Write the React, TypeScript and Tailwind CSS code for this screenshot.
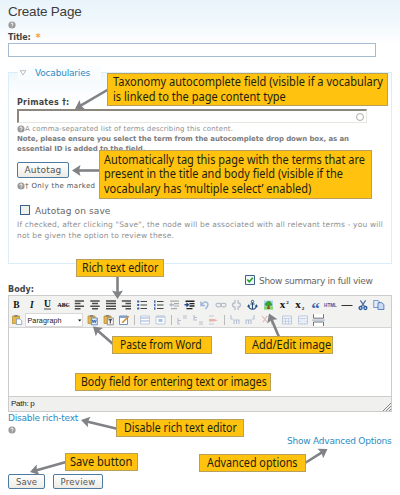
import { useLayoutEffect, useRef, useState } from "react";
import type { ReactNode } from "react";
import { clsx } from "clsx";

/* A single line of text whose tracking is adjusted to fill a given width. */
function Line({ w, className, children }: { w: number; className?: string; children: string }) {
  const ref = useRef<HTMLSpanElement>(null);
  const [spacing, setSpacing] = useState(0);
  useLayoutEffect(() => {
    const el = ref.current;
    if (el) {
      const natural = el.getBoundingClientRect().width - spacing * children.length;
      setSpacing((w - natural) / children.length);
    }
  }, [w, children]);
  return (
    <span className={clsx("block", className)}>
      <span ref={ref} className="inline-block whitespace-pre" style={{ letterSpacing: spacing }}>
        {children}
      </span>
    </span>
  );
}

/* A caption line, condensed horizontally to a given width. */
function Caption({ w, children }: { w: number; children: string }) {
  const ref = useRef<HTMLSpanElement>(null);
  const [scale, setScale] = useState(1);
  useLayoutEffect(() => {
    if (ref.current) setScale(w / ref.current.offsetWidth);
  }, [w, children]);
  return (
    <span className="block h-[14.5px]">
      <span ref={ref} className="inline-block origin-left whitespace-pre" style={{ transform: `scaleX(${scale})` }}>
        {children}
      </span>
    </span>
  );
}

function Help({ className }: { className?: string }) {
  return (
    <svg viewBox="0 0 8 8" className={clsx("size-[8px] shrink-0", className)}>
      <circle cx="4" cy="4" r="3.6" fill="#999" />
      <path d="M2.8 3.2Q2.9 2 4 2t1.2 1.1Q5.2 3.8 4 4.3v.5M4 5.5v.8" fill="none" stroke="#fff" strokeWidth=".9" />
    </svg>
  );
}

function Callout({ className, children }: { className: string; children: ReactNode }) {
  return (
    <div
      className={clsx(
        "absolute flex flex-col justify-center border border-[#b9a05a] bg-[#ffc20e] font-['Noto_Sans','Open_Sans',sans-serif] text-[12.5px] leading-[14.5px] text-[#231f10]",
        className,
      )}
    >
      {children}
    </div>
  );
}

function Button({ className, children }: { className: string; children: ReactNode }) {
  return (
    <button
      className={clsx(
        "flex items-center justify-center rounded-[2px] border border-[#4f7a9f] bg-linear-to-b from-white to-[#ecebe6] text-[#555]",
        className,
      )}
    >
      {children}
    </button>
  );
}

function Icon({ x, y = 10, children }: { x: number; y?: number; children: ReactNode }) {
  return <g transform={`translate(${x - 5} ${y - 5})`}>{children}</g>;
}

const clipboard = (
  <>
    <path d="M.5 1h7v7.5h-7z" fill="#e6b84c" stroke="#b88728" strokeWidth=".7" />
    <path d="M2.3 0h3.4v2H2.3z" fill="#8c887b" />
  </>
);
const list = <path d="M3.5 1.5H10M3.5 5H10M3.5 8.5H10" stroke="#444" strokeWidth="1.2" />;
const table = (
  <>
    <path d="M.5 1h9v8h-9z" fill="#f2f5fa" stroke="#bdc9dc" />
    <path d="M1 3.5h8M1 6.3h8M3.5 3.5V9M6.5 3.5V9" stroke="#bdc9dc" strokeWidth=".8" />
  </>
);

function Toolbar() {
  return (
    <svg viewBox="0 1 382 31" className="block h-[31px] w-[382px]" fill="none">
      <g fill="#111" fontFamily="'Liberation Serif', serif" fontWeight="700" fontSize="9.5" textAnchor="middle">
        <text x="7.3" y="13">B</text>
        <text x="22.8" y="13" fontStyle="italic">I</text>
        <text x="38.5" y="12.4">U</text>
        <text x="54.7" y="12.3" fontSize="5.8">ABC</text>
        <text x="273.5" y="13" fontSize="11">x</text>
        <text x="278.5" y="9" fontSize="5">2</text>
        <text x="289" y="13" fontSize="11">x</text>
        <text x="294" y="14.5" fontSize="5">2</text>
        <text x="321.5" y="11.8" fontSize="4.6" fill="#315a9c" fontFamily="'Liberation Sans', sans-serif">HTML</text>
        <text x="306.5" y="19.3" fontSize="17" fill="#3a69a8">“</text>
      </g>
      <path d="M35 14h7" stroke="#222" strokeWidth=".8" />
      <path d="M48.5 10.5h12" stroke="#333" strokeWidth=".5" />
      <g stroke="#4c4c4c" strokeWidth="1.5">
        <Icon x={70.5}><path d="M.3 1h9.2M.3 3.6h5.7M.3 6.2h9.2M.3 8.8h5.7" /></Icon>
        <Icon x={86}><path d="M.3 1h9.4M2 3.6h6M.3 6.2h9.4M2 8.8h6" /></Icon>
        <Icon x={102}><path d="M0 1h10M0 3.6h10M0 6.2h10M0 8.8h10" /></Icon>
        <Icon x={117.5}><path d="M.3 1h9.2M4 3.6h5.5M.3 6.2h9.2M4 8.8h5.5" /></Icon>
      </g>
      <Icon x={133}>{list}<path d="M.2 1.5h2M.2 5h2M.2 8.5h2" stroke="#315a9c" strokeWidth="2" /></Icon>
      <Icon x={149.5}>{list}<path d="M1.3 .2v2.5M1.3 3.8v2.5M1.3 7.2v2.6" stroke="#315a9c" strokeWidth="1.3" /></Icon>
      <Icon x={165}>
        <path d="M1 1.2h9M5 3.6h5M5 6h5M2 8.6h6" stroke="#aaa" strokeWidth="1.2" />
        <path d="M0 4.8l3-2.3v1.6h2v1.4H3v1.6z" fill="#aeb9cc" />
      </Icon>
      <Icon x={180.5}>
        <path d="M1 1.2h9M5 3.6h5M5 6h5M2 8.6h6" stroke="#222" strokeWidth="1.4" />
        <path d="M5 4.8L1.9 2.2v1.8H0v1.6h1.9v1.8z" fill="#244985" />
      </Icon>
      <Icon x={195.5}><path d="M1.5 1.5v4h4M1.8 5Q5 .5 7.5 2.5T6 9" stroke="#9cb5dc" strokeWidth="1.5" /></Icon>
      <Icon x={212}>
        <rect x="0" y="3.3" width="5" height="3.6" rx="1.8" stroke="#b7bdc8" strokeWidth="1.2" />
        <rect x="5" y="3.3" width="5" height="3.6" rx="1.8" stroke="#b7bdc8" strokeWidth="1.2" />
      </Icon>
      <Icon x={227.5}>
        <path d="M4 3H2Q0 5 2 7h2M6 3h2q2 2 0 4H6M3 0l1 2M7 0L6 2M3 10l1-2M7 10L6 8" stroke="#b7bdc8" strokeWidth="1.3" />
      </Icon>
      <Icon x={243.5}>
        <circle cx="5" cy="1.5" r="1.2" stroke="#244c78" strokeWidth=".9" />
        <path d="M5 2.5V9M2.8 4h4.4M.8 5.5Q1.3 9 5 9.3 8.7 9 9.2 5.5M.3 7l.7-1.7 1.3 1.2M9.7 7L9 5.3 7.7 6.5" stroke="#244c78" strokeWidth="1.1" />
      </Icon>
      <Icon x={259.5}>
        <path d="M.5 .5h9v9h-9z" fill="#a9d5ef" />
        <path d="M.5 6.5h9v3h-9z" fill="#8fd463" />
        <path d="M4.2 5h1.6l.5 4H3.7z" fill="#7c4d22" />
        <path d="M1.2 5Q.8 3 2.6 2.4 3.6 .5 5.5 1 7.5 1 7.8 2.9 9.4 3.9 8.5 5.5 6.5 6.3 5 5.6 2.5 6.5 1.2 5z" fill="#3ba332" />
      </Icon>
      <path d="M332.5 10.5h11" stroke="#333" />
      <Icon x={354}>
        <path d="M2.3 .3L6.7 6.6M7.7 .3L3.3 6.6" stroke="#52749d" strokeWidth="1.3" />
        <circle cx="2.6" cy="8" r="1.5" stroke="#24579b" strokeWidth="1.3" />
        <circle cx="7.4" cy="8" r="1.5" stroke="#24579b" strokeWidth="1.3" />
      </Icon>
      <Icon x={369.5}>
        <path d="M.2.5h4.5l1.5 1.5v5.5H.2z" fill="#e3edf9" stroke="#5b83bd" strokeWidth=".8" />
        <path d="M4.5 2.7h3.8L10.4 4.5v5H4.5z" fill="#cadcf3" stroke="#3f6dae" strokeWidth=".8" />
      </Icon>

      <Icon x={8} y={25}>{clipboard}<path d="M4.5 4h3.3l1.9 1.7v3.8H4.5z" fill="#fff" stroke="#6f91bd" strokeWidth=".7" /></Icon>
      <path d="M16.5 18.5h57v13h-57z" fill="#fff" stroke="#ccc" strokeWidth=".7" />
      <text x="18.5" y="27.6" fontSize="7.2" fill="#222" fontFamily="'Liberation Sans', sans-serif" textLength="34">Paragraph</text>
      <path d="M69 24.5h3.4l-1.7 1.9z" fill="#111" />
      <Icon x={83.5} y={25}>
        {clipboard}
        <path d="M3.8 3h6v6.8h-6z" fill="#e3edfb" stroke="#4c76b7" strokeWidth=".8" />
        <path d="M4.8 4.7l.8 3 1.1-2.6 1.1 2.6.9-3" stroke="#275aa5" strokeWidth=".9" />
      </Icon>
      <Icon x={99.5} y={25}>
        {clipboard}
        <path d="M3.8 3h6v6.8h-6z" fill="#fff" stroke="#777" strokeWidth=".8" />
        <path d="M5 4.8h3.6M6.8 4.8v3.7" stroke="#222" strokeWidth="1" />
      </Icon>
      <Icon x={115} y={25}>
        <path d="M.5 1h8v8.5h-8z" fill="#fff" stroke="#6e94c1" />
        <path d="M1 2h7" stroke="#6e94c1" strokeWidth="1.6" />
        <path d="M3.3 7.8L9.7 1.2" stroke="#d38d36" strokeWidth="1.6" />
      </Icon>
      <path d="M125.5 20v10M162.5 20v10M215.5 20v10" stroke="#bbb" />
      <Icon x={136} y={25}><path d="M.5 1h9v8h-9z" fill="#fff" stroke="#bdc9dc" /><path d="M1 3h8M1 6h8" stroke="#b9c9e4" strokeWidth="1.5" /></Icon>
      <Icon x={151.5} y={25}><path d="M.5 1h9v8h-9z" fill="#fff" stroke="#bdc9dc" /><path d="M1 2h8" stroke="#bdc9dc" strokeWidth="1.5" /><path d="M3 4h4v3H3z" fill="#adc0df" /></Icon>
      <Icon x={173} y={25}><path d="M1 3v6h2M1 5.5h3M6 1h4M6 3h4" stroke="#b7bfcb" strokeWidth="1.1" /></Icon>
      <Icon x={189} y={25}><path d="M1 0v5h3M1 2.5h3M6 7h4M6 9h4" stroke="#b7bfcb" strokeWidth="1.1" /></Icon>
      <Icon x={204} y={25}><path d="M1 1h5M1 9h5" stroke="#c3c9d2" /><path d="M1 4h5l4 1.2L6 6.5H1z" fill="#e9b1ab" /></Icon>
      <Icon x={226} y={25}><path d="M1 0v4h2M4 9V5h5v4M6.5 5v4" stroke="#b6c2d3" strokeWidth="1.1" /></Icon>
      <Icon x={241} y={25}><path d="M9 0v4H7M1 9V5h5v4M3.5 5v4" stroke="#b6c2d3" strokeWidth="1.1" /></Icon>
      <Icon x={257} y={25}><path d="M1 1l5 6M6 1L2 7" stroke="#e0b5b5" strokeWidth="1.1" /><path d="M6.5 1.5h4v8" stroke="#ccc" /></Icon>
      <Icon x={278} y={25}>{table}</Icon>
      <Icon x={294} y={25}>{table}<path d="M3 4h4v4H3z" fill="#e8eef8" /></Icon>
      <Icon x={309.5} y={25}>
        <path d="M0-.8v4h10v-4M0 11V7h10v4" fill="#fff" stroke="#666" strokeWidth=".9" />
        <path d="M-1.5 5.1h13" stroke="#8fa9c8" strokeWidth=".9" />
      </Icon>
    </svg>
  );
}

/* Annotation arrow from a callout to the control it describes. */
function Arrow({ from, to }: { from: [number, number]; to: [number, number] }) {
  const [x1, y1] = from;
  const [x2, y2] = to;
  const length = Math.hypot(x2 - x1, y2 - y1);
  const angle = (Math.atan2(y2 - y1, x2 - x1) * 180) / Math.PI;
  return (
    <g transform={`translate(${x1} ${y1}) rotate(${angle})`} fill="#808285">
      <path d={`M0-1.3H${length - 6}V1.3H0z`} />
      <path d={`M${length} 0l-8.5-5.5 1.5 5.5-1.5 5.5z`} />
    </g>
  );
}

export default function App() {
  return (
    <div className="relative h-[495px] w-[400px] overflow-hidden bg-white bg-[linear-gradient(to_bottom,#e9f4fa_0px,#f0f8fc_22px,#ffffff_44px)] pl-[8px] font-['DejaVu_Sans',Verdana,sans-serif] text-[#666]">
      <h1 className="h-[21px] pt-[3px] font-['Liberation_Sans',sans-serif] text-[13.5px] leading-[18px] text-[#3c3c3c]">
        <Line w={73.5}>Create Page</Line>
      </h1>
      <Help />
      <div className="mt-[3px] flex h-[11px] items-center gap-[5px] text-[8px] leading-[11px] font-bold text-[#444]">
        <Line w={22.5}>Title:</Line>
        <span className="text-[10px] text-[#f5a81c]">*</span>
      </div>
      <input className="block h-[14px] w-[368px] border border-[#a5bbcf] bg-white" />

      <fieldset className="mt-[15px] h-[192px] w-[384px] border border-[#dcedfa] bg-linear-to-b from-[#f0f8fd] to-white to-[28px] px-[8px]">
        <div className="-mt-[7px] ml-px flex h-[14px] w-[83px] items-center bg-[#fafdff]">
          <svg viewBox="0 0 8 6" className="ml-[1px] h-[6px] w-[8px]">
            <path d="M1.2.7h5.6L4 5z" fill="#fff" stroke="#b5b5b5" strokeWidth=".9" />
          </svg>
          <Line w={55} className="ml-[8px] text-[9px] leading-[14px] text-[#2b8cc4]">Vocabularies</Line>
        </div>
        <Line w={52.5} className="mt-[17px] h-[11px] text-[8px] leading-[12px] font-bold text-[#444]">Primates †:</Line>
        <div className="mt-px flex h-[14px] w-[350px] items-center justify-end border border-t-2 border-l-2 border-[#e8e6e0] border-t-[#8b877c] border-l-[#8b877c] bg-white pr-[2px]">
          <span className="size-[8px] rounded-full border-[1.5px] border-[#aaa]" />
        </div>
        <div className="mt-px flex h-[10px] items-center text-[7px] leading-[10px] text-[#8f8f8f]">
          <Help />
          <Line w={208}>A comma-separated list of terms describing this content.</Line>
        </div>
        <div className="text-[7px] leading-[10px] font-bold text-[#7c7c7c]">
          <Line w={332}>Note, please ensure you select the term from the autocomplete drop down box, as an</Line>
          <Line w={128}>essential ID is added to the field.</Line>
        </div>
        <Button className="mt-[8px] h-[16px] w-[52px] text-[9px] leading-[12px]">
          <Line w={37}>Autotag</Line>
        </Button>
        <div className="mt-[3px] flex h-[10px] items-center text-[7px] leading-[10px] text-[#555]">
          <Help />
          <Line w={73}>† Only the marked </Line>
        </div>
        <div className="mt-[13px] ml-[3px] flex h-[12px] items-center text-[9px] leading-[12px]">
          <span className="size-[10px] border border-[#38618e] bg-[#f0f0ed]" />
          <Line w={75.5} className="ml-[5px] pt-px">Autotag on save</Line>
        </div>
        <div className="mt-[3px] text-[7.5px] leading-[11px] text-[#8f8f8f]">
          <Line w={366}>If checked, after clicking "Save", the node will be associated with all relevant terms - you will</Line>
          <Line w={157}>not be given the option to review these.</Line>
        </div>
      </fieldset>

      <div className="mt-[10px] ml-[237px] flex h-[12px] items-center text-[9px] leading-[12px]">
        <svg viewBox="0 0 10 10" className="size-[10px]">
          <path d="M.5.5h9v9h-9z" fill="#f4f6f5" stroke="#38618e" />
          <path d="M2.3 4.5l2 2.2 3.5-4" fill="none" stroke="#25a02d" strokeWidth="1.7" />
        </svg>
        <Line w={113.5} className="ml-[4px] pt-px">Show summary in full view</Line>
      </div>
      <Line w={26} className="-mt-[2px] h-[11px] text-[8px] leading-[12px] font-bold text-[#444]">Body:</Line>
      <div className="flex h-[117px] w-[384px] flex-col border border-[#ccc] bg-white">
        <div className="h-[32px] border-b border-[#d4d4d4] bg-[#f2f2f1]">
          <Toolbar />
        </div>
        <div className="flex-1" />
        <div className="flex h-[15px] items-center justify-between border-t border-[#ccc] bg-[#f0f0ee] pl-[2px] font-['Liberation_Sans',sans-serif] text-[8px] leading-[14px] text-[#222]">
          <Line w={23.5}>Path: p</Line>
          <svg viewBox="0 0 8 8" className="size-[8px] self-end">
            <path d="M0 8l8-8M3 8l5-5M6 8l2-2" stroke="#777" strokeWidth=".9" />
          </svg>
        </div>
      </div>
      <Line w={70} className="h-[13px] text-[9px] leading-[13px] text-[#2b8cc4]">Disable rich-text</Line>
      <Help className="mt-px" />
      <Line w={104.5} className="mt-px ml-[279px] h-[12px] text-[9px] leading-[12px] text-[#2b8cc4]">Show Advanced Options</Line>
      <div className="mt-[27px] flex gap-[8px] text-[8.5px] leading-[12px]">
        <Button className="h-[15px] w-[37px]">
          <Line w={21}>Save</Line>
        </Button>
        <Button className="h-[15px] w-[50px]">
          <Line w={35}>Preview</Line>
        </Button>
      </div>

      <svg viewBox="0 0 400 495" className="pointer-events-none absolute inset-0 h-[495px] w-[400px]">
        <Arrow from={[109, 89]} to={[75, 109]} />
        <Arrow from={[100, 170.5]} to={[72, 170.5]} />
        <Arrow from={[117.5, 275]} to={[117.5, 299]} />
        <Arrow from={[113, 344]} to={[93, 326.5]} />
        <Arrow from={[279, 337]} to={[269, 313.5]} />
        <Arrow from={[118, 429]} to={[81, 420]} />
        <Arrow from={[66, 462]} to={[30, 472]} />
        <Arrow from={[305, 463]} to={[327.5, 449]} />
      </svg>

      <Callout className="top-[73px] left-[107px] h-[33px] w-[281px] pl-[5px]">
        <Caption w={270}>Taxonomy autocomplete field (visible if a vocabulary</Caption>
        <Caption w={173}>is linked to the page content type</Caption>
      </Callout>
      <Callout className="top-[150px] left-[99px] h-[49px] w-[273px] pl-[4px]">
        <Caption w={261}>Automatically tag this page with the terms that are</Caption>
        <Caption w={238.5}>present in the title and body field (visible if the</Caption>
        <Caption w={207}>vocabulary has ‘multiple select’ enabled)</Caption>
      </Callout>
      <Callout className="top-[259px] left-[76px] h-[18px] w-[88px] pl-[5px]">
        <Caption w={76.5}>Rich text editor</Caption>
      </Callout>
      <Callout className="top-[336px] left-[112px] h-[18px] w-[100px] pl-[7px]">
        <Caption w={82}>Paste from Word</Caption>
      </Callout>
      <Callout className="top-[336px] left-[245px] h-[18px] w-[88px] pl-[6px]">
        <Caption w={79}>Add/Edit image</Caption>
      </Callout>
      <Callout className="top-[373px] left-[75px] h-[18px] w-[196px] pl-[5px]">
        <Caption w={186}>Body field for entering text or images</Caption>
      </Callout>
      <Callout className="top-[419px] left-[116px] h-[18px] w-[128px] pl-[7px]">
        <Caption w={113}>Disable rich text editor</Caption>
      </Callout>
      <Callout className="top-[453px] left-[65px] h-[18px] w-[73px] pl-[4px]">
        <Caption w={62}>Save button</Caption>
      </Callout>
      <Callout className="top-[454px] left-[199px] h-[18px] w-[107px] pl-[7px]">
        <Caption w={90.5}>Advanced options</Caption>
      </Callout>
    </div>
  );
}
